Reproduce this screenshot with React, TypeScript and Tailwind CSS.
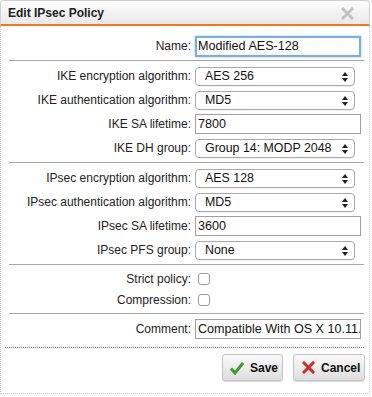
import React from 'react';

const font = { fontFamily: '"Liberation Sans", Arial, Helvetica, sans-serif' };

function Label({ children }: { children: React.ReactNode }) {
  return (
    <span className="w-[182px] shrink-0 whitespace-nowrap text-right text-[12px] leading-none text-[#222]">
      {children}
    </span>
  );
}

function Select({ value }: { value: string }) {
  return (
    <div className="relative flex h-[19px] w-[160px] items-center whitespace-nowrap rounded-[4px] border border-[#a9a9a9] bg-white pl-[9px] text-[12.4px] leading-none text-[#111] shadow-[0_1px_0_rgba(0,0,0,0.05)]">
      {value}
      <svg className="absolute right-[6px] top-[4px]" width="6" height="10" viewBox="0 0 6 10">
        <path d="M3 0 L6 4 L0 4 Z" fill="#222" />
        <path d="M0 6 L6 6 L3 10 Z" fill="#222" />
      </svg>
    </div>
  );
}

function TextInput({ value, focused }: { value: string; focused?: boolean }) {
  return (
    <div
      className={
        focused
          ? 'flex h-[21px] w-[166px] items-center overflow-hidden whitespace-nowrap border-2 border-[#78aee6] bg-white pl-[1px] text-[12.6px] leading-none text-[#111] shadow-[0_0_2px_#9cc6f0]'
          : 'flex h-[20px] w-[166px] items-center overflow-hidden whitespace-nowrap border border-[#a0a0a0] bg-white pl-[2px] text-[12.6px] leading-none text-[#111]'
      }
    >
      {value}
    </div>
  );
}

function Checkbox() {
  return <div className="ml-[3px] h-[12px] w-[12px] rounded-[3px] border border-[#9a9a9a] bg-white" />;
}

function Row({ label, h = 'h-[24px]', children }: { label: string; h?: string; children: React.ReactNode }) {
  return (
    <div className={`flex items-center gap-[4px] ${h}`}>
      <Label>{label}</Label>
      {children}
    </div>
  );
}

function Separator() {
  return <div className="h-px bg-[#a8a8a8]" />;
}

export default function App() {
  return (
    <div className="h-[397px] w-[372px] bg-white" style={font}>
      <div className="w-[370px]">
        <div className="relative flex h-[26px] items-center rounded-t-[4px] border border-b-2 border-[#d0d0d0] border-b-[#f07a1a] bg-gradient-to-b from-[#fdfdfd] to-[#e9e9e9] pl-[7px]">
          <span className="text-[12px] font-bold text-[#222]">Edit IPsec Policy</span>
          <svg className="absolute right-[15px] top-[6px]" width="13" height="13" viewBox="0 0 13 13">
            <path d="M2 2 L11 11 M11 2 L2 11" stroke="#c2c2c2" strokeWidth="3" strokeLinecap="square" />
          </svg>
        </div>
        <div className="h-[368px] border-x border-b border-dotted border-[#c8c8c8] pl-[8px] pr-[5px]">
          <div className="pt-[9px]">
            <Row label="Name:" h="h-[22px]">
              <TextInput value="Modified AES-128" focused />
            </Row>
          </div>
          <div className="mt-[3px]">
            <Separator />
          </div>
          <div className="pt-[3px] pb-[2px]">
            <Row label="IKE encryption algorithm:">
              <Select value="AES 256" />
            </Row>
            <Row label="IKE authentication algorithm:">
              <Select value="MD5" />
            </Row>
            <Row label="IKE SA lifetime:">
              <TextInput value="7800" />
            </Row>
            <Row label="IKE DH group:">
              <Select value="Group 14: MODP 2048" />
            </Row>
          </div>
          <Separator />
          <div className="pt-[3px] pb-[2px]">
            <Row label="IPsec encryption algorithm:">
              <Select value="AES 128" />
            </Row>
            <Row label="IPsec authentication algorithm:">
              <Select value="MD5" />
            </Row>
            <Row label="IPsec SA lifetime:">
              <TextInput value="3600" />
            </Row>
            <Row label="IPsec PFS group:">
              <Select value="None" />
            </Row>
          </div>
          <Separator />
          <div className="pt-[3px] pb-[3px]">
            <Row label="Strict policy:" h="h-[21px]">
              <Checkbox />
            </Row>
            <Row label="Compression:" h="h-[21px]">
              <Checkbox />
            </Row>
          </div>
          <Separator />
          <div className="pt-[3px]">
            <Row label="Comment:" h="h-[24px]">
              <TextInput value="Compatible With OS X 10.11." />
            </Row>
          </div>
          <div className="-ml-[4px] mt-[6px] border-t border-dotted border-[#808080]" />
          <div className="-mr-[1px] flex justify-end gap-[10px] pt-[6px]">
            <button className="flex h-[27px] w-[61px] items-center gap-[6px] rounded-[3px] border border-[#c4c4c4] bg-gradient-to-b from-[#fafafa] to-[#dedede] pl-[7px] text-[12px] font-bold text-[#111] shadow-[0_1px_1px_rgba(0,0,0,0.15)]">
              <svg width="14" height="14" viewBox="0 0 14 14">
                <path d="M1 7.5 L5 12 L13 2" fill="none" stroke="#3c9b2f" strokeWidth="3" strokeLinejoin="miter" />
              </svg>
              Save
            </button>
            <button className="flex h-[27px] w-[72px] items-center gap-[6px] rounded-[3px] border border-[#c4c4c4] bg-gradient-to-b from-[#fafafa] to-[#dedede] pl-[8px] text-[12px] font-bold text-[#111] shadow-[0_1px_1px_rgba(0,0,0,0.15)]">
              <svg width="13" height="13" viewBox="0 0 13 13">
                <path d="M2 2 L11 11 M11 2 L2 11" stroke="#d42a2a" strokeWidth="3" strokeLinecap="square" />
              </svg>
              Cancel
            </button>
          </div>
        </div>
      </div>
    </div>
  );
}
